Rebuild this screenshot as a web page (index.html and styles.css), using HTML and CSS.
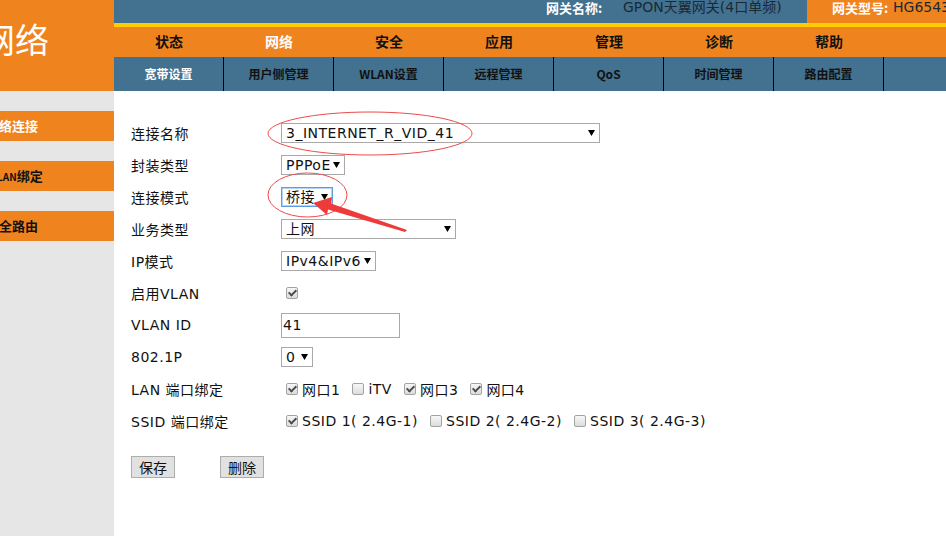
FILE: index.html
```html
<!DOCTYPE html>
<html lang="zh-CN">
<head>
    <meta charset="UTF-8">
    <meta name="viewport" content="width=device-width, initial-scale=1.0">
    <title>网络 - 宽带设置</title>
    <link rel="stylesheet" href="styles.css">
</head>
<body>
    <div class="page">
        <div class="logo"><span>网络</span></div>

        <div class="header">
            <div class="topbar">
                <span class="tb-label">网关名称:</span>
                <span class="tb-value">GPON天翼网关(4口单频)</span>
                <div class="tb-model">
                    <span class="tb-label short">网关型号:</span>
                    <span class="tb-value">HG6543C</span>
                </div>
            </div>
            <div class="nav">
                <a>状态</a>
                <a class="active">网络</a>
                <a>安全</a>
                <a>应用</a>
                <a>管理</a>
                <a>诊断</a>
                <a>帮助</a>
            </div>
            <div class="subnav">
                <a class="active">宽带设置</a>
                <a>用户侧管理</a>
                <a>WLAN设置</a>
                <a>远程管理</a>
                <a>QoS</a>
                <a>时间管理</a>
                <a>路由配置</a>
            </div>
        </div>

        <div class="sidebar">
            <div class="side-item active"><span>网络连接</span></div>
            <div class="side-item"><span class="lan"><small>LAN</small>绑定</span></div>
            <div class="side-item"><span>安全路由</span></div>
        </div>

        <div class="content">
            <div class="row">
                <label class="lbl">连接名称</label>
                <span class="sel"><select class="w-name"><option>3_INTERNET_R_VID_41</option></select></span>
            </div>
            <div class="row">
                <label class="lbl">封装类型</label>
                <span class="sel"><select class="w-pppoe"><option>PPPoE</option></select></span>
            </div>
            <div class="row">
                <label class="lbl">连接模式</label>
                <span class="sel"><select class="w-mode focus"><option>桥接</option></select></span>
            </div>
            <div class="row">
                <label class="lbl">业务类型</label>
                <span class="sel"><select class="w-type"><option>上网</option></select></span>
            </div>
            <div class="row">
                <label class="lbl">IP模式</label>
                <span class="sel"><select class="w-ip"><option>IPv4&amp;IPv6</option></select></span>
            </div>
            <div class="row">
                <label class="lbl">启用VLAN</label>
                <label class="chk"><input type="checkbox" checked></label>
            </div>
            <div class="row">
                <label class="lbl">VLAN ID</label>
                <input class="text" type="text" value="41">
            </div>
            <div class="row">
                <label class="lbl">802.1P</label>
                <span class="sel"><select class="w-pri"><option>0</option></select></span>
            </div>
            <div class="row">
                <label class="lbl">LAN 端口绑定</label>
                <label class="chk"><input type="checkbox" checked>网口1</label>
                <label class="chk"><input type="checkbox">iTV</label>
                <label class="chk"><input type="checkbox" checked>网口3</label>
                <label class="chk"><input type="checkbox" checked>网口4</label>
            </div>
            <div class="row">
                <label class="lbl">SSID 端口绑定</label>
                <label class="chk"><input type="checkbox" checked>SSID 1( 2.4G-1)</label>
                <label class="chk"><input type="checkbox">SSID 2( 2.4G-2)</label>
                <label class="chk"><input type="checkbox">SSID 3( 2.4G-3)</label>
            </div>
            <div class="actions">
                <button class="btn">保存</button>
                <button class="btn">删除</button>
            </div>
        </div>
    </div>

    <!-- annotation drawn over the screenshot -->
    <svg class="marks" width="946" height="536" viewBox="0 0 946 536">
        <ellipse cx="370" cy="133.5" rx="102" ry="21.5" fill="none" stroke="#ec4b4b" stroke-width="1"/>
        <ellipse cx="307.5" cy="195" rx="39.5" ry="22" fill="none" stroke="#ec4b4b" stroke-width="1"/>
        <polygon points="313,203 332,197 331,203.5 407,230 405,232 328,209.5 327,215" fill="#ef3a3a"/>
    </svg>
</body>
</html>
```

FILE: styles.css
```css
* {
    box-sizing: border-box;
}

body {
    margin: 0;
    width: 946px;
    height: 536px;
    overflow: hidden;
    position: relative;
    background: #fff;
    color: #111;
    font-family: "DejaVu Sans", "Noto Sans CJK SC", sans-serif;
    font-size: 14px;
}

.page {
    display: grid;
    grid-template-columns: 114px 1fr;
    grid-template-rows: 91px 1fr;
    height: 536px;
}

/* left logo block */
.logo {
    background: #ef841e;
    color: #fff;
    overflow: hidden;
    white-space: nowrap;
    padding-top: 22px;
    font-family: "Noto Sans CJK SC", sans-serif;
    font-size: 34px;
    line-height: 34px;
}

.logo span {
    display: inline-block;
    margin-left: -19px;
}

/* header */
.topbar {
    display: flex;
    height: 23px;
    padding-left: 432px;
    background: #42728f;
    line-height: 15px;
    white-space: nowrap;
    overflow: hidden;
}

.tb-label {
    width: 77px;
    flex-shrink: 0;
    color: #fff;
    font-weight: bold;
    font-size: 13px;
    font-family: "Noto Sans CJK SC", sans-serif;
}

.tb-label.short {
    width: 61px;
}

.tb-value {
    color: #1b2836;
    font-size: 14px;
}

.tb-model {
    display: flex;
    margin-left: auto;
    width: 139px;
    flex-shrink: 0;
    padding-left: 25px;
    background: #ef841e;
    overflow: hidden;
}

.nav {
    display: flex;
    height: 34px;
    border-top: 4px solid #ffcc00;
    background: #ef841e;
}

.nav a,
.subnav a {
    width: 110px;
    flex-shrink: 0;
    text-align: center;
    font-weight: bold;
    color: #111;
    font-family: "Noto Sans CJK SC", sans-serif;
}

.nav a {
    font-size: 14px;
    line-height: 28px;
}

.subnav {
    display: flex;
    height: 34px;
    background: #42728f;
}

.subnav a {
    border-right: 1px solid #000;
    font-size: 12px;
    line-height: 34px;
}

.nav a.active,
.subnav a.active {
    color: #fff;
}

/* sidebar */
.sidebar {
    background: #e6e6e6;
    padding-top: 20px;
}

.side-item {
    height: 30px;
    margin-bottom: 20px;
    background: #ef841e;
    overflow: hidden;
    white-space: nowrap;
    line-height: 30px;
    font-size: 13px;
    font-weight: bold;
    color: #111;
    font-family: "Noto Sans CJK SC", sans-serif;
}

.side-item.active {
    color: #fff;
}

.side-item span {
    display: inline-block;
    margin-left: -14px;
}

.side-item span.lan {
    margin-left: -3px;
}

.side-item small {
    font-size: 10px;
}

/* form */
.content {
    padding: 26px 0 0 17px;
}

.row {
    display: flex;
    align-items: center;
    height: 32px;
    letter-spacing: .5px;
    white-space: nowrap;
}

.lbl {
    width: 150px;
    flex-shrink: 0;
}

.sel {
    position: relative;
    display: inline-block;
    height: 20px;
}

.sel::after {
    content: "";
    position: absolute;
    right: 5px;
    top: 7px;
    width: 7px;
    height: 6px;
    background: #000;
    clip-path: polygon(0 0, 100% 0, 50% 100%);
}

.sel select {
    display: block;
    appearance: none;
    -webkit-appearance: none;
    height: 20px;
    margin: 0;
    padding: 0 0 0 4px;
    border: 1px solid #a9a9a9;
    border-radius: 0;
    background: #fff;
    color: #111;
    font: inherit;
    letter-spacing: inherit;
    outline: none;
}

.sel select.focus {
    border-color: #5b9ce6;
    box-shadow: inset 0 0 0 1px #b7d3f4;
}

.w-name { width: 319px; }
.w-pppoe { width: 64px; }
.w-mode { width: 52px; }
.w-type { width: 175px; }
.w-ip { width: 95px; }
.w-pri { width: 32px; }

.text {
    width: 119px;
    height: 25px;
    margin: 0;
    padding: 0 1px;
    border: 1px solid #a9a9a9;
    color: #111;
    font: inherit;
    letter-spacing: inherit;
}

.chk {
    display: inline-flex;
    align-items: center;
    margin-right: 7px;
}

.chk input {
    appearance: none;
    -webkit-appearance: none;
    position: relative;
    width: 12px;
    height: 12px;
    margin: 0 4px 0 5px;
    border: 1px solid #a3a3a3;
    border-radius: 2px;
    background: linear-gradient(#f7f7f7, #dcdcdc);
}

.chk input:checked::after {
    content: "";
    position: absolute;
    left: 3px;
    top: 0;
    width: 3px;
    height: 6px;
    border: solid #4d4d4d;
    border-width: 0 2px 2px 0;
    transform: rotate(45deg);
}

.actions {
    display: flex;
    gap: 45px;
    margin-top: 19px;
}

.btn {
    width: 44px;
    height: 22px;
    padding: 0;
    border: 1px solid #adadad;
    background: #e1e1e1;
    color: #111;
    font: inherit;
    font-family: "Noto Sans CJK SC", sans-serif;
}

.marks {
    position: absolute;
    left: 0;
    top: 0;
    pointer-events: none;
}
```
